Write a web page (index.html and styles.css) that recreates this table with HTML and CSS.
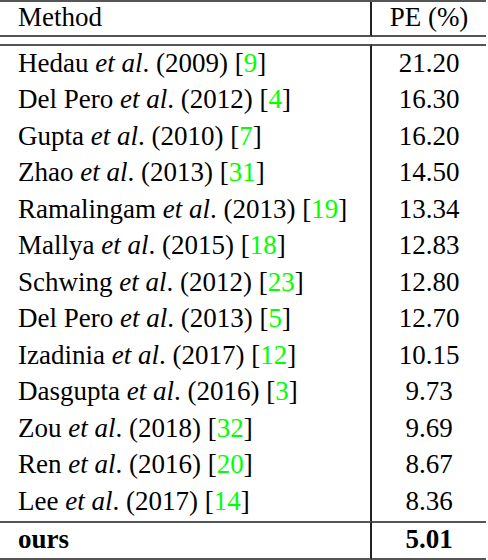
FILE: index.html
```html
<!DOCTYPE html>
<html lang="en">
<head>
    <meta charset="UTF-8">
    <title>Results</title>
    <link rel="stylesheet" href="styles.css">
</head>
<body>
    <table class="results">
        <thead>
            <tr class="head-row">
                <th class="method">Method</th>
                <th class="score">PE (%)</th>
            </tr>
            <tr class="gap-row"><td class="method"></td><td></td></tr>
        </thead>
        <tbody>
            <tr class="first"><td class="method">Hedau <i>et al</i>. (2009) [<span class="cite">9</span>]</td><td class="score">21.20</td></tr>
            <tr><td class="method">Del Pero <i>et al</i>. (2012) [<span class="cite">4</span>]</td><td class="score">16.30</td></tr>
            <tr><td class="method">Gupta <i>et al</i>. (2010) [<span class="cite">7</span>]</td><td class="score">16.20</td></tr>
            <tr><td class="method">Zhao <i>et al</i>. (2013) [<span class="cite">31</span>]</td><td class="score">14.50</td></tr>
            <tr><td class="method">Ramalingam <i>et al</i>. (2013) [<span class="cite">19</span>]</td><td class="score">13.34</td></tr>
            <tr><td class="method">Mallya <i>et al</i>. (2015) [<span class="cite">18</span>]</td><td class="score">12.83</td></tr>
            <tr><td class="method">Schwing <i>et al</i>. (2012) [<span class="cite">23</span>]</td><td class="score">12.80</td></tr>
            <tr><td class="method">Del Pero <i>et al</i>. (2013) [<span class="cite">5</span>]</td><td class="score">12.70</td></tr>
            <tr><td class="method">Izadinia <i>et al</i>. (2017) [<span class="cite">12</span>]</td><td class="score">10.15</td></tr>
            <tr><td class="method">Dasgupta <i>et al</i>. (2016) [<span class="cite">3</span>]</td><td class="score">9.73</td></tr>
            <tr><td class="method">Zou <i>et al</i>. (2018) [<span class="cite">32</span>]</td><td class="score">9.69</td></tr>
            <tr><td class="method">Ren <i>et al</i>. (2016) [<span class="cite">20</span>]</td><td class="score">8.67</td></tr>
            <tr><td class="method">Lee <i>et al</i>. (2017) [<span class="cite">14</span>]</td><td class="score">8.36</td></tr>
            <tr class="ours"><td class="method"><b>ours</b></td><td class="score"><b>5.01</b></td></tr>
        </tbody>
    </table>
</body>
</html>
```

FILE: styles.css
```css
body {
    margin: 0;
    background: white;
    color: black;
    font-family: "Liberation Serif", "Times New Roman", serif;
    font-size: 27px;
}
.results {
    width: 486px;
    border-collapse: separate;
    border-spacing: 0;
    border-top: 2px solid #555;
}
.results th, .results td {
    padding: 0;
    font-weight: normal;
    line-height: 1;
}
.results .method {
    text-align: left;
    padding-left: 18px;
    width: 352px;
    border-right: 2px solid #222;
}
.results .score {
    text-align: center;
}
.head-row th {
    height: 31px;
    padding-bottom: 2px;
    border-bottom: 2px solid #555;
}
.results .gap-row td {
    height: 7px;
    padding: 0;
    border-right: none;
}
.results tbody td {
    height: 34.5px;
    padding-bottom: 2px;
}
.first td {
    border-top: 2px solid #555;
}
.results .ours td {
    height: 33px;
    border-top: 2px solid #555;
    border-bottom: 2px solid #555;
}
.cite {
    color: #00ff00;
}
```
